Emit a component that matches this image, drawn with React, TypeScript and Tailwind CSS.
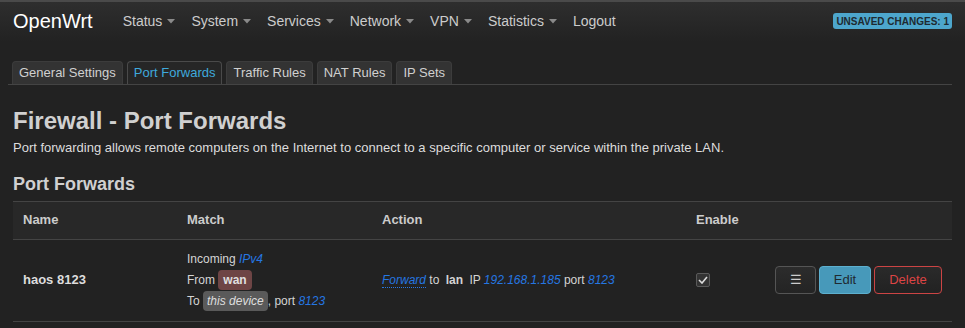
import React from "react"

const menu = ["Status", "System", "Services", "Network", "VPN", "Statistics"]
const tabs = ["General Settings", "Port Forwards", "Traffic Rules", "NAT Rules", "IP Sets"]

function Caret() {
  return (
    <svg width="8" height="5" viewBox="0 0 8 5" className="ml-[5px] mt-[1px]">
      <path d="M0 0 L8 0 L4 4.5 Z" fill="#8a8a8a" />
    </svg>
  )
}

export default function App() {
  return (
    <div className="w-[965px] h-[328px] overflow-hidden bg-[#222222] text-[#cccccc] font-['Liberation_Sans',Arial,sans-serif]">
      {/* Header */}
      <header className="h-[42px] border-t-2 border-[#4a4a4a] bg-gradient-to-b from-[#2e2e2e] to-[#222222] flex items-center px-[13px]">
        <span className="text-[20px] text-white leading-none mr-[30px] -mt-[2px]">OpenWrt</span>
        <nav className="flex items-center text-[14px] text-[#cccccc] -mt-[2px]">
          {menu.map((m) => (
            <span key={m} className="flex items-center mr-[16px]">
              {m}
              <Caret />
            </span>
          ))}
          <span>Logout</span>
        </nav>
        <span className="ml-auto bg-[#4da6cc] text-[#1e2a30] text-[10px] font-bold px-[3px] h-[16px] flex items-center rounded-[3px] -mt-[2px]">
          UNSAVED CHANGES: 1
        </span>
      </header>

      <main className="ml-2 mr-[13px]">
        {/* Tabs */}
        <ul className="flex gap-[4px] pl-[4px] mt-[19px] border-b border-[#444444]">
          {tabs.map((t) => (
            <li
              key={t}
              className={`h-[23px] px-[6px] flex items-center text-[13px] rounded-t-[4px] border border-b-0 ${
                t === "Port Forwards"
                  ? "bg-[#262626] border-[#4a4a4a] text-[#3fa9dc]"
                  : "bg-[#333333] border-[#3c3c3c] text-[#d0d0d0]"
              }`}
            >
              {t}
            </li>
          ))}
        </ul>

        <div className="pl-[5px]">
          <h1 className="mt-[22px] text-[24px] font-bold leading-[28px] text-[#d0d0d0]">Firewall - Port Forwards</h1>
          <p className="text-[13px] mt-[3px] text-[#dddddd]">
            Port forwarding allows remote computers on the Internet to connect to a specific computer or service within the private LAN.
          </p>
          <h3 className="mt-[13px] text-[18px] font-bold text-[#d0d0d0]">Port Forwards</h3>

          {/* Table */}
          <div className="mt-[3px] text-[13px]">
            <div className="grid grid-cols-[174px_195px_314px_1fr] h-[39px] items-center bg-[#282828] border-y border-[#444444] font-bold text-[#cccccc]">
              <span className="pl-[10px]">Name</span>
              <span>Match</span>
              <span>Action</span>
              <span>Enable</span>
            </div>
            <div className="grid grid-cols-[174px_195px_314px_1fr] h-[82px] items-center border-b border-[#444444]">
              <span className="pl-[10px] font-bold text-[#dddddd]">haos 8123</span>
              <div className="text-[12px] leading-[21px] text-[#d4d4d4]">
                <div>
                  Incoming <i className="text-[#2577e3]">IPv4</i>
                </div>
                <div>
                  From{" "}
                  <span className="bg-[#6e4545] rounded-[4px] px-[5px] py-[3px] font-bold text-[#e0e0e0]">wan</span>
                </div>
                <div>
                  To{" "}
                  <span className="bg-[#5a5a5a] rounded-[4px] px-[4px] py-[3px] italic text-[#dddddd]">this device</span>, port{" "}
                  <i className="text-[#2577e3]">8123</i>
                </div>
              </div>
              <div className="text-[12px] text-[#d4d4d4]">
                <i className="text-[#2577e3] border-b border-dotted border-[#2577e3]">Forward</i> to{" "}
                <b className="px-[3px]">lan</b> IP <i className="text-[#2577e3]">192.168.1.185</i> port{" "}
                <i className="text-[#2577e3]">8123</i>
              </div>
              <div className="flex items-center">
                <span className="w-[14px] h-[14px] border border-[#5a5a5a] bg-[#333333] rounded-[2px] flex items-center justify-center">
                  <svg width="10" height="8" viewBox="0 0 10 8">
                    <path d="M1 4 L4 7 L9 1" stroke="#dddddd" strokeWidth="1.6" fill="none" />
                  </svg>
                </span>
                <div className="ml-auto mr-[10px] flex gap-[3px] text-[13px]">
                  <button className="w-[41px] h-[28px] rounded-[4px] border border-[#555555] bg-gradient-to-b from-[#2c2c2c] to-[#242424] text-[#cccccc] flex items-center justify-center">
                    ☰
                  </button>
                  <button className="w-[52px] h-[28px] rounded-[4px] border border-[#5db0cf] bg-[#4799ba] text-[#1f2a30]">
                    Edit
                  </button>
                  <button className="w-[68px] h-[28px] rounded-[4px] border border-[#cc4444] bg-gradient-to-b from-[#2a2a2a] to-[#222222] text-[#dd4444]">
                    Delete
                  </button>
                </div>
              </div>
            </div>
          </div>
        </div>
      </main>
    </div>
  )
}
